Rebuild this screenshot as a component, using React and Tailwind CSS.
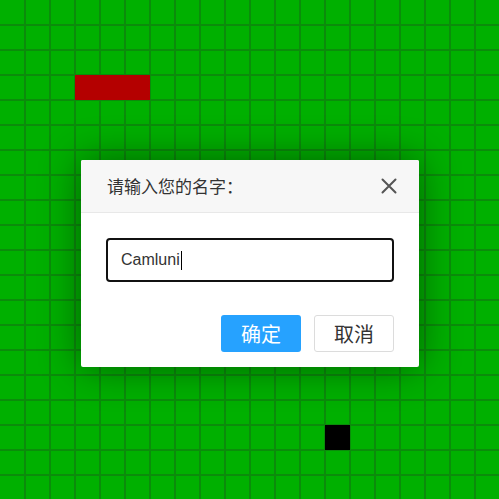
import React from "react";

const SNAKE = new Set(["3-3", "3-4", "3-5"]);
const FOOD = "17-13";

function Cell({ r, c }) {
  const key = `${r}-${c}`;
  if (SNAKE.has(key)) return <div className="w-[25px] h-[25px] bg-[#b40000]" />;
  if (key === FOOD) return <div className="w-[25px] h-[25px] bg-black" />;
  const cls = [
    "w-[25px] h-[25px] bg-[#00b000] border-[#0b8c0b] border-r border-b",
    c > 0 ? "border-l" : "",
    r > 0 ? "border-t" : "",
  ].join(" ");
  return <div className={cls} />;
}

export default function App() {
  const rows = Array.from({ length: 20 }, (_, i) => i);
  return (
    <div className="relative w-[499px] h-[499px] overflow-hidden bg-[#00b000]">
      <div className="grid grid-cols-[repeat(20,25px)] grid-rows-[repeat(20,25px)] w-[500px]">
        {rows.map((r) => rows.map((c) => <Cell key={`${r}-${c}`} r={r} c={c} />))}
      </div>

      <div className="absolute left-[81px] top-[160px] w-[338px] bg-white rounded-[2px] shadow-[0_0_40px_rgba(0,0,0,0.45)] overflow-hidden">
        <div className="h-[53px] bg-[#f7f7f7] border-b border-[#e8e8e8] flex items-center justify-between pl-[26px] pr-[22px]">
          <span className="text-[17px] text-[#333] font-['Noto_Sans_CJK_SC',sans-serif]">请输入您的名字：</span>
          <svg width="16" height="16" viewBox="0 0 16 16" className="text-[#555]">
            <path d="M1.5 1.5 L14.5 14.5 M14.5 1.5 L1.5 14.5" stroke="currentColor" strokeWidth="2" strokeLinecap="round" />
          </svg>
        </div>
        <div className="pt-[25px] px-[25px] pb-[15px]">
          <div className="h-[44px] border-2 border-[#111] rounded-[4px] flex items-center pl-[13px] text-[16px] text-[#333] font-['Liberation_Sans',Arial,sans-serif]">
            <span>Camluni</span>
            <span className="inline-block w-px h-[19px] bg-black ml-px" />
          </div>
          <div className="mt-[33px] flex justify-end gap-[13px]">
            <button className="w-[80px] h-[37px] rounded-[3px] bg-[#26a2ff] text-white text-[20px] font-['Noto_Sans_CJK_SC',sans-serif]">确定</button>
            <button className="w-[80px] h-[37px] rounded-[3px] bg-white border border-[#dcdcdc] text-[#333] text-[20px] font-['Noto_Sans_CJK_SC',sans-serif]">取消</button>
          </div>
        </div>
      </div>
    </div>
  );
}
